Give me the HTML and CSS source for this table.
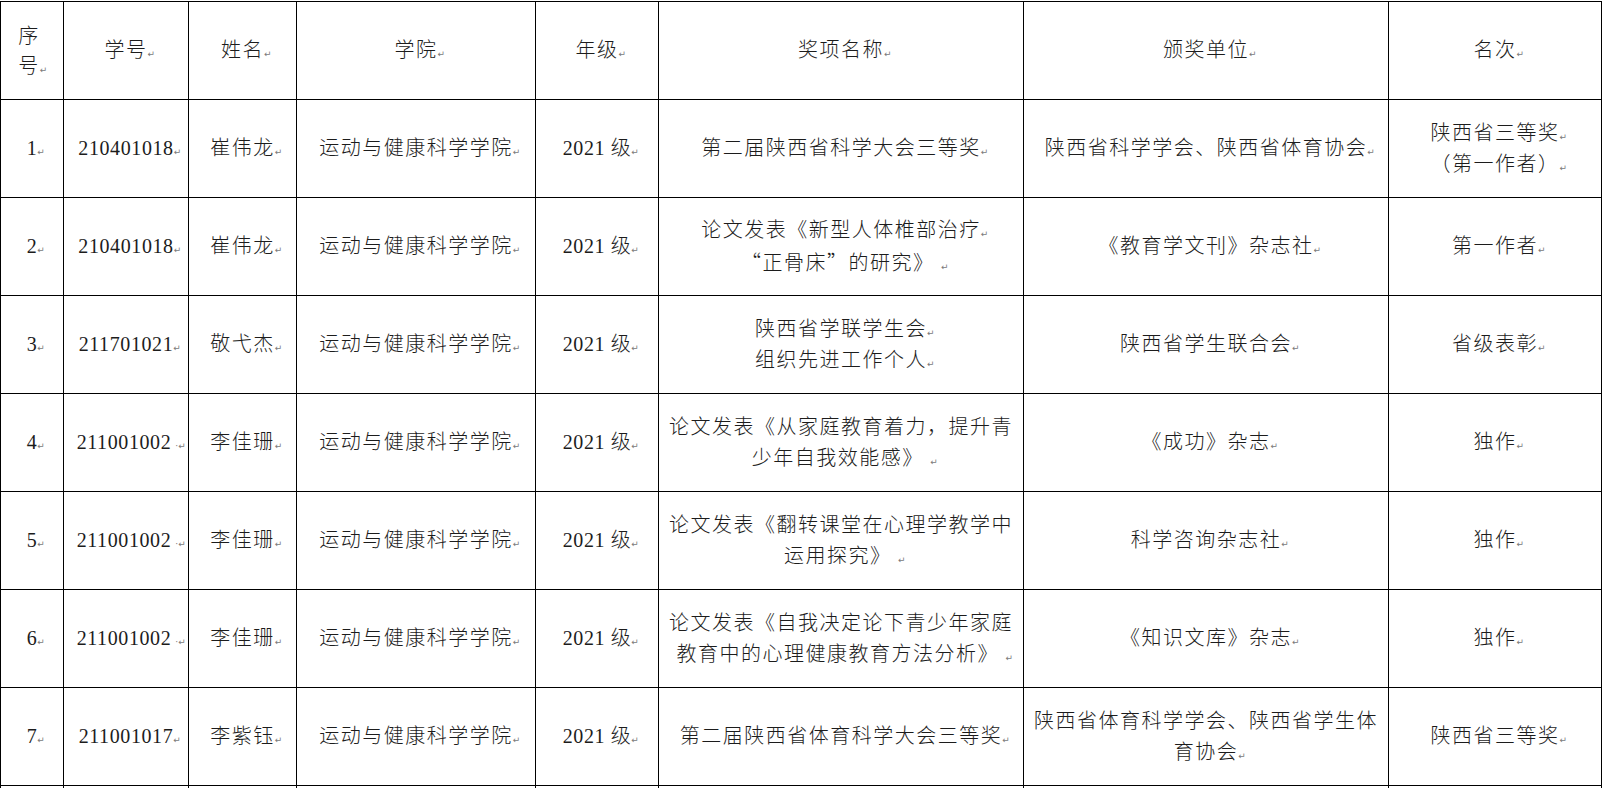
FILE: index.html
```html
<!DOCTYPE html>
<html lang="zh-CN">
<head>
<meta charset="utf-8">
<title>获奖名单</title>
<link rel="stylesheet" href="styles.css">
</head>
<body>
<table class="grid">
  <colgroup>
    <col class="c1"><col class="c2"><col class="c3"><col class="c4">
    <col class="c5"><col class="c6"><col class="c7"><col class="c8">
  </colgroup>
  <tbody>
    <tr>
      <td class="first">序<br>号<span class="pm">↵</span></td>
      <td>学号<span class="pm">↵</span></td>
      <td>姓名<span class="pm">↵</span></td>
      <td>学院<span class="pm">↵</span></td>
      <td>年级<span class="pm">↵</span></td>
      <td>奖项名称<span class="pm">↵</span></td>
      <td>颁奖单位<span class="pm">↵</span></td>
      <td>名次<span class="pm">↵</span></td>
    </tr>
    <tr>
      <td class="num">1<span class="pm">↵</span></td>
      <td class="num">210401018<span class="pm">↵</span></td>
      <td>崔伟龙<span class="pm">↵</span></td>
      <td>运动与健康科学学院<span class="pm">↵</span></td>
      <td class="num">2021 级<span class="pm">↵</span></td>
      <td>第二届陕西省科学大会三等奖<span class="pm">↵</span></td>
      <td>陕西省科学学会、陕西省体育协会<span class="pm">↵</span></td>
      <td>陕西省三等奖<span class="pm">↵</span><br>（第一作者）<span class="pm">↵</span></td>
    </tr>
    <tr>
      <td class="num">2<span class="pm">↵</span></td>
      <td class="num">210401018<span class="pm">↵</span></td>
      <td>崔伟龙<span class="pm">↵</span></td>
      <td>运动与健康科学学院<span class="pm">↵</span></td>
      <td class="num">2021 级<span class="pm">↵</span></td>
      <td>论文发表《新型人体椎部治疗<span class="pm">↵</span><br><span class="cjk">“正骨床”</span>的研究》 <span class="pm">↵</span></td>
      <td>《教育学文刊》杂志社<span class="pm">↵</span></td>
      <td>第一作者<span class="pm">↵</span></td>
    </tr>
    <tr>
      <td class="num">3<span class="pm">↵</span></td>
      <td class="num">211701021<span class="pm">↵</span></td>
      <td>敬弋杰<span class="pm">↵</span></td>
      <td>运动与健康科学学院<span class="pm">↵</span></td>
      <td class="num">2021 级<span class="pm">↵</span></td>
      <td>陕西省学联学生会<span class="pm">↵</span><br>组织先进工作个人<span class="pm">↵</span></td>
      <td>陕西省学生联合会<span class="pm">↵</span></td>
      <td>省级表彰<span class="pm">↵</span></td>
    </tr>
    <tr>
      <td class="num">4<span class="pm">↵</span></td>
      <td class="num">211001002<span class="pm dot">·↵</span></td>
      <td>李佳珊<span class="pm">↵</span></td>
      <td>运动与健康科学学院<span class="pm">↵</span></td>
      <td class="num">2021 级<span class="pm">↵</span></td>
      <td>论文发表《从家庭教育着力，提升青<br>少年自我效能感》 <span class="pm">↵</span></td>
      <td>《成功》杂志<span class="pm">↵</span></td>
      <td>独作<span class="pm">↵</span></td>
    </tr>
    <tr>
      <td class="num">5<span class="pm">↵</span></td>
      <td class="num">211001002<span class="pm dot">·↵</span></td>
      <td>李佳珊<span class="pm">↵</span></td>
      <td>运动与健康科学学院<span class="pm">↵</span></td>
      <td class="num">2021 级<span class="pm">↵</span></td>
      <td>论文发表《翻转课堂在心理学教学中<br>运用探究》 <span class="pm">↵</span></td>
      <td>科学咨询杂志社<span class="pm">↵</span></td>
      <td>独作<span class="pm">↵</span></td>
    </tr>
    <tr>
      <td class="num">6<span class="pm">↵</span></td>
      <td class="num">211001002<span class="pm dot">·↵</span></td>
      <td>李佳珊<span class="pm">↵</span></td>
      <td>运动与健康科学学院<span class="pm">↵</span></td>
      <td class="num">2021 级<span class="pm">↵</span></td>
      <td>论文发表《自我决定论下青少年家庭<br>教育中的心理健康教育方法分析》 <span class="pm">↵</span></td>
      <td>《知识文库》杂志<span class="pm">↵</span></td>
      <td>独作<span class="pm">↵</span></td>
    </tr>
    <tr>
      <td class="num">7<span class="pm">↵</span></td>
      <td class="num">211001017<span class="pm">↵</span></td>
      <td>李紫钰<span class="pm">↵</span></td>
      <td>运动与健康科学学院<span class="pm">↵</span></td>
      <td class="num">2021 级<span class="pm">↵</span></td>
      <td>第二届陕西省体育科学大会三等奖<span class="pm">↵</span></td>
      <td>陕西省体育科学学会、陕西省学生体<br>育协会<span class="pm">↵</span></td>
      <td>陕西省三等奖<span class="pm">↵</span></td>
    </tr>
    <tr>
      <td class="num"></td>
      <td class="num"></td>
      <td></td>
      <td></td>
      <td class="num"></td>
      <td></td>
      <td></td>
      <td></td>
    </tr>
  </tbody>
</table>
</body>
</html>
```

FILE: styles.css
```css
html, body {
  margin: 0;
  padding: 0;
  background: #ffffff;
  overflow: hidden;
}

body {
  padding-top: 1px;
}

.grid {
  border-collapse: collapse;
  table-layout: fixed;
  width: 1601px;
  font-family: "Liberation Serif", "Noto Sans CJK SC", serif;
  font-size: 20px;
  font-weight: 300;
  color: #1c1c1c;
}

.c1 { width: 63px; }
.c2 { width: 125px; }
.c3 { width: 108px; }
.c4 { width: 239px; }
.c5 { width: 123px; }
.c6 { width: 365px; }
.c7 { width: 365px; }
.c8 { width: 213px; }

.grid tr {
  height: 98px;
}

.grid td {
  border: 1px solid #000000;
  padding: 0 4px;
  text-align: center;
  vertical-align: middle;
  line-height: 31px;
  letter-spacing: 1.5px;
  overflow: hidden;
  white-space: nowrap;
}

.grid td.num {
  letter-spacing: 0.6px;
}

.grid td.first {
  line-height: 30px;
  padding-right: 10px;
}

.cjk {
  font-family: "Noto Sans CJK SC", sans-serif;
}

.pm {
  display: inline-block;
  width: 0;
  font-family: "DejaVu Sans", sans-serif;
  font-size: 9px;
  line-height: 8px;
  font-weight: 400;
  letter-spacing: 0;
  color: #7a7a7a;
  white-space: nowrap;
  vertical-align: baseline;
}

.pm.dot {
  font-size: 9px;
  padding-left: 4px;
}
```
